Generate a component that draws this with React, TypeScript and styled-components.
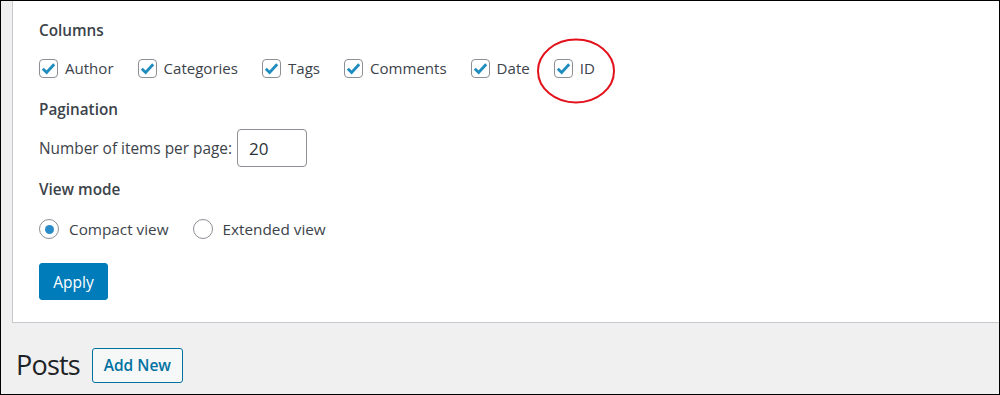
import React from "react";
import styled, { createGlobalStyle } from "styled-components";

const Global = createGlobalStyle`
  html, body { margin: 0; padding: 0; background: #fff; }
  * { box-sizing: border-box; }
`;

const Frame = styled.div`
  width: 1000px;
  height: 395px;
  border: 1px solid #000;
  background: #f0f0f1;
  overflow: hidden;
  position: relative;
  font-family: "Open Sans", "Noto Sans", sans-serif;
  color: #3c434a;
  display: flex;
  flex-direction: column;
`;

const Panel = styled.div`
  margin-left: 11px;
  height: 322px;
  background: #fff;
  border-left: 1px solid #c8c9cf;
  border-bottom: 1px solid #c8c9cf;
  padding: 18px 0 0 26px;
  display: flex;
  flex-direction: column;
  align-items: flex-start;
`;

const Legend = styled.div<{ $mt: number }>`
  margin-top: ${(p) => p.$mt}px;
  font-size: 15.3px;
  font-weight: 600;
  color: #3c434a;
  line-height: 22px;
  height: 22px;
`;

const Row = styled.div<{ $gap: number; $mt: number }>`
  display: flex;
  align-items: center;
  gap: ${(p) => p.$gap}px;
  margin-top: ${(p) => p.$mt}px;
  height: 38px;
`;

const Option = styled.label<{ $gap: number; $size: number }>`
  display: flex;
  align-items: center;
  gap: ${(p) => p.$gap}px;
  font-size: ${(p) => p.$size}px;
  color: #3c434a;
  line-height: 20px;
`;

const Box = styled.span`
  width: 19px;
  height: 19px;
  border: 1px solid #8c8f94;
  border-radius: 4px;
  background: #fff;
  display: flex;
  align-items: center;
  justify-content: center;
  flex: none;
`;

const Radio = styled.span<{ $on?: boolean }>`
  width: 20px;
  height: 20px;
  border: 1px solid #8c8f94;
  border-radius: 50%;
  background: #fff;
  display: flex;
  align-items: center;
  justify-content: center;
  flex: none;
  &::after {
    content: "";
    display: ${(p) => (p.$on ? "block" : "none")};
    width: 9px;
    height: 9px;
    border-radius: 50%;
    background: #2a8bc9;
  }
`;

const FieldLabel = styled.span`
  font-size: 15.4px;
  color: #3c434a;
`;

const NumberInput = styled.div`
  width: 70px;
  height: 38px;
  border: 1px solid #8c8f94;
  border-radius: 4px;
  padding-left: 11px;
  display: flex;
  align-items: center;
  font-size: 17px;
  color: #2c3338;
`;

const ApplyButton = styled.button`
  margin-top: 15px;
  width: 69px;
  height: 37px;
  background: #007cba;
  border: 1px solid #007cba;
  border-radius: 3px;
  color: #fff;
  font-family: inherit;
  font-size: 15.5px;
  padding: 0;
`;

const TitleRow = styled.div`
  display: flex;
  align-items: center;
  padding: 24px 0 0 15px;
  gap: 12px;
`;

const Title = styled.h1`
  margin: 0;
  font-size: 27px;
  letter-spacing: -0.8px;
  font-weight: 400;
  color: #1d2327;
  line-height: 36px;
`;

const OutlineButton = styled.button`
  width: 91px;
  height: 35px;
  border: 1px solid #0071a1;
  border-radius: 3px;
  background: #f6f7f7;
  color: #0071a1;
  font-family: inherit;
  font-size: 15.5px;
  font-weight: 600;
  padding: 0;
`;

const Annotation = styled.svg`
  position: absolute;
  left: 535px;
  top: 36px;
  width: 80px;
  height: 68px;
  pointer-events: none;
`;

const Check = () => (
  <svg width="17" height="17" viewBox="0 0 17 17">
    <polyline
      points="2.8,8.8 6.6,12.4 14.2,4.2"
      fill="none"
      stroke="#1e8cbe"
      strokeWidth="2.8"
      strokeLinecap="butt"
      strokeLinejoin="miter"
    />
  </svg>
);

const columns = ["Author", "Categories", "Tags", "Comments", "Date", "ID"];

export default function App() {
  return (
    <>
      <Global />
      <Frame>
        <Panel>
          <Legend $mt={0}>Columns</Legend>
          <Row $gap={24} $mt={8}>
            {columns.map((c) => (
              <Option key={c} $gap={7} $size={15.05}>
                <Box>
                  <Check />
                </Box>
                {c}
              </Option>
            ))}
          </Row>
          <Legend $mt={11}>Pagination</Legend>
          <Row $gap={5} $mt={9}>
            <FieldLabel>Number of items per page:</FieldLabel>
            <NumberInput>20</NumberInput>
          </Row>
          <Legend $mt={11}>View mode</Legend>
          <Row $gap={24} $mt={10}>
            <Option $gap={10} $size={15.3}>
              <Radio $on />
              Compact view
            </Option>
            <Option $gap={10} $size={15.3}>
              <Radio />
              Extended view
            </Option>
          </Row>
          <ApplyButton>Apply</ApplyButton>
        </Panel>
        <TitleRow>
          <Title>Posts</Title>
          <OutlineButton>Add New</OutlineButton>
        </TitleRow>
        <Annotation viewBox="0 0 80 68">
          <ellipse cx="40" cy="34" rx="38" ry="31.5" fill="none" stroke="#e3111b" strokeWidth="2" />
        </Annotation>
      </Frame>
    </>
  );
}
